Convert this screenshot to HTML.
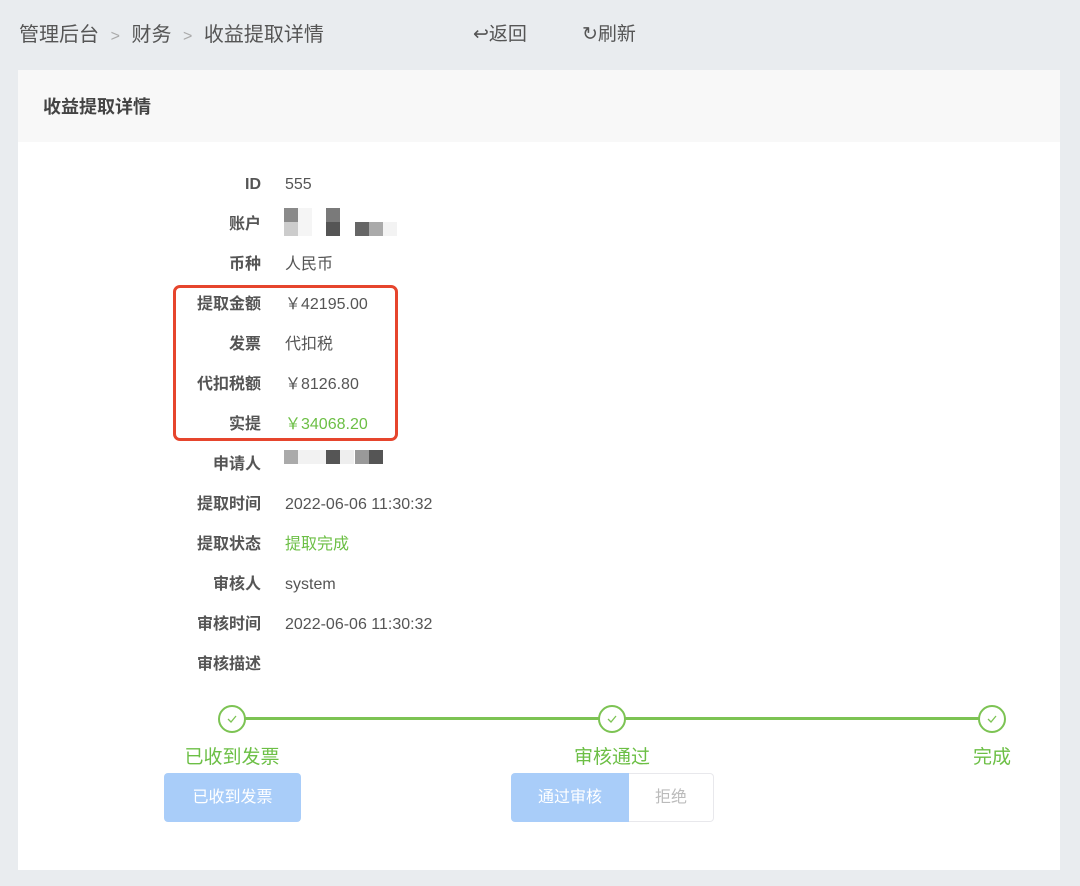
<!DOCTYPE html>
<html><head><meta charset="utf-8"><style>
*{margin:0;padding:0;box-sizing:border-box}
body{width:1080px;height:886px;background:#e9ecef;font-family:"Liberation Sans","Noto Sans CJK SC",sans-serif;position:relative;overflow:hidden;color:#555}
.a{position:absolute}
.crumb{font-size:20px;color:#555;top:23px;line-height:24px}
.card{left:18px;top:70px;width:1042px;height:800px;background:#fff}
.hd{left:0;top:0;width:1042px;height:72px;background:#f8f8f8}
.lbl{position:absolute;right:819px;font-size:16px;font-weight:bold;color:#555;width:120px;text-align:right;line-height:20px}
.val{position:absolute;left:285px;font-size:16px;color:#555;line-height:20px}
.b{position:absolute}
.g{color:#6cbf45}
.circ{position:absolute;width:28px;height:28px;border:2px solid #7cc353;border-radius:50%;background:#fff;top:705px}
.circ svg{position:absolute;left:6px;top:6px}
.sl{position:absolute;top:746px;font-size:19px;color:#6cbf45;text-align:center;width:160px;line-height:24px}
</style></head><body>
<div class="a crumb" style="left:19px">管理后台 <span style="color:#aaa;font-size:16px;margin:0 6px">&gt;</span> 财务 <span style="color:#aaa;font-size:16px;margin:0 6px">&gt;</span> 收益提取详情</div>
<div class="a crumb" style="left:473px;font-size:19px">↩返回</div>
<div class="a crumb" style="left:582px;font-size:19px">↻刷新</div>
<div class="a card"><div class="a hd"><div class="a" style="left:25px;top:26px;font-size:18px;font-weight:bold;color:#444;line-height:22px">收益提取详情</div></div></div>
<div class="lbl" style="top:175px">ID</div><div class="val" style="top:175px">555</div>
<div class="lbl" style="top:215px">账户</div>
<div class="b" style="left:284px;top:208px;width:14px;height:14px;background:#8a8a8a"></div>
<div class="b" style="left:284px;top:222px;width:14px;height:14px;background:#ccc"></div>
<div class="b" style="left:298px;top:208px;width:14px;height:28px;background:#f5f5f5"></div>
<div class="b" style="left:326px;top:208px;width:14px;height:14px;background:#7a7a7a"></div>
<div class="b" style="left:326px;top:222px;width:14px;height:14px;background:#555"></div>
<div class="b" style="left:355px;top:222px;width:14px;height:14px;background:#666"></div>
<div class="b" style="left:369px;top:222px;width:14px;height:14px;background:#aaa"></div>
<div class="b" style="left:383px;top:222px;width:14px;height:14px;background:#f3f3f3"></div>
<div class="lbl" style="top:255px">币种</div><div class="val" style="top:255px">人民币</div>
<div class="lbl" style="top:295px">提取金额</div><div class="val" style="top:295px">￥42195.00</div>
<div class="lbl" style="top:335px">发票</div><div class="val" style="top:335px">代扣税</div>
<div class="lbl" style="top:375px">代扣税额</div><div class="val" style="top:375px">￥8126.80</div>
<div class="lbl" style="top:415px">实提</div><div class="val g" style="top:415px">￥34068.20</div>
<div class="a" style="left:173px;top:285px;width:225px;height:156px;border:3px solid #e6452d;border-radius:7px"></div>
<div class="lbl" style="top:455px">申请人</div>
<div class="b" style="left:284px;top:450px;width:14px;height:14px;background:#aaa"></div>
<div class="b" style="left:298px;top:450px;width:28px;height:14px;background:#f2f2f2"></div>
<div class="b" style="left:326px;top:450px;width:14px;height:14px;background:#555"></div>
<div class="b" style="left:340px;top:450px;width:14px;height:14px;background:#eee"></div>
<div class="b" style="left:355px;top:450px;width:14px;height:14px;background:#999"></div>
<div class="b" style="left:369px;top:450px;width:14px;height:14px;background:#555"></div>
<div class="lbl" style="top:495px">提取时间</div><div class="val" style="top:495px">2022-06-06 11:30:32</div>
<div class="lbl" style="top:535px">提取状态</div><div class="val g" style="top:535px">提取完成</div>
<div class="lbl" style="top:575px">审核人</div><div class="val" style="top:575px">system</div>
<div class="lbl" style="top:615px">审核时间</div><div class="val" style="top:615px">2022-06-06 11:30:32</div>
<div class="lbl" style="top:655px">审核描述</div>
<div class="a" style="left:232px;top:717px;width:760px;height:3px;background:#7cc353"></div>
<div class="circ" style="left:218px"><svg width="12" height="12" viewBox="0 0 12 12"><path d="M2 6l3 3 5-6" fill="none" stroke="#7cc353" stroke-width="1.3"/></svg></div>
<div class="circ" style="left:598px"><svg width="12" height="12" viewBox="0 0 12 12"><path d="M2 6l3 3 5-6" fill="none" stroke="#7cc353" stroke-width="1.3"/></svg></div>
<div class="circ" style="left:978px"><svg width="12" height="12" viewBox="0 0 12 12"><path d="M2 6l3 3 5-6" fill="none" stroke="#7cc353" stroke-width="1.3"/></svg></div>
<div class="sl" style="left:152px">已收到发票</div>
<div class="sl" style="left:532px">审核通过</div>
<div class="sl" style="left:912px">完成</div>
<div class="a" style="left:164px;top:773px;width:137px;height:49px;background:#a9cdf9;border-radius:4px;color:#fff;font-size:16px;text-align:center;line-height:49px">已收到发票</div>
<div class="a" style="left:511px;top:773px;width:118px;height:49px;background:#a9cdf9;border-radius:4px 0 0 4px;color:#fff;font-size:16px;text-align:center;line-height:49px">通过审核</div>
<div class="a" style="left:629px;top:773px;width:85px;height:49px;background:#fff;border:1px solid #e8e8ec;border-left:none;border-radius:0 4px 4px 0;color:#bbb;font-size:16px;text-align:center;line-height:47px">拒绝</div>
</body></html>
